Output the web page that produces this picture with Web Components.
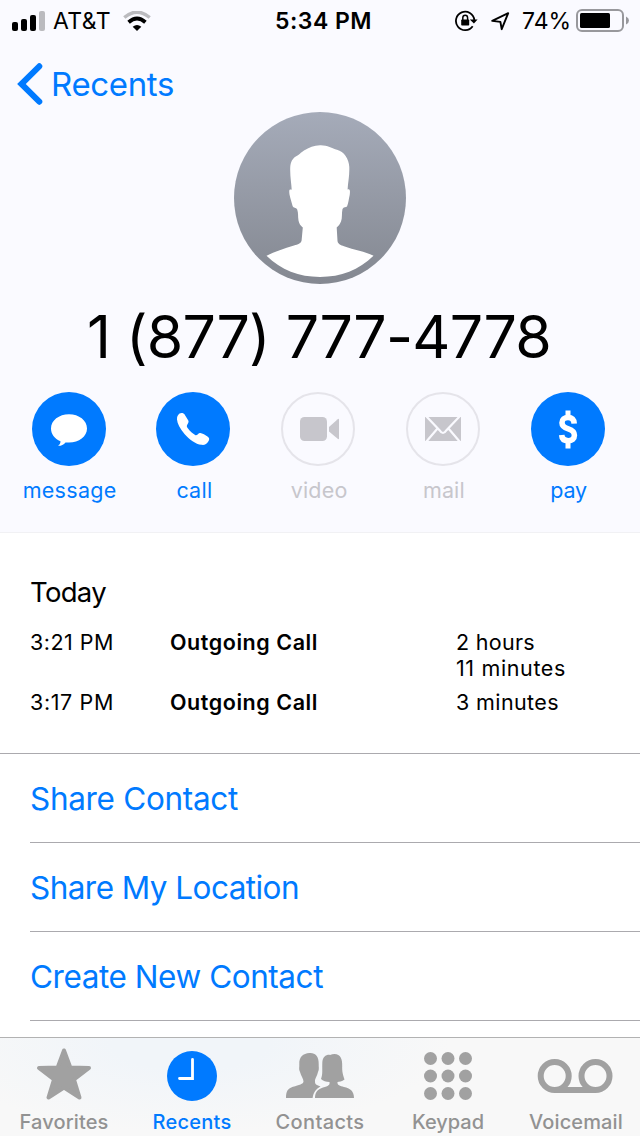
<!DOCTYPE html>
<html lang="en">
<head>
<meta charset="utf-8">
<title>Recents</title>
<style>
  body{
    --color-tint:#007aff;
    --color-disabled:#c7c6cc;
    --color-line:#abaaae;
    --color-hero:#fafaff;
    margin:0;
    width:640px;
    height:1136px;
    overflow:hidden;
    background:white;
    color:black;
    font-family:Inter,"Liberation Sans",sans-serif;
  }
</style>
</head>
<body>
<phone-screen></phone-screen>
<script>
// text tracked out (or in) to a given advance width
class TrackedText extends HTMLElement{
  constructor(){
    super();
    this.attachShadow({mode:'open'});
    this.shadowRoot.innerHTML=`<style>
    :host{ display:inline-block; white-space:nowrap; }
</style><slot></slot>`;
  }
  connectedCallback(){
    const target=parseFloat(this.getAttribute("w"));
    const natural=this.getBoundingClientRect().width;
    const count=this.textContent.length;
    if(target&&natural){
      this.style.letterSpacing=((target-natural)/count).toFixed(3)+"px";
    }
  }
}

class StatusBar extends HTMLElement{
  render(){
    return `
<style>
    :host{
      display:grid;
      grid-template-columns:1fr auto 1fr;
      align-items:center;
      height:41px;
      padding:0 11px 0 12px;
      font-size:23px;
      line-height:41px;
    }
    div{ display:flex; align-items:center; }
    svg{ display:block; }
    tracked-text{ padding-top:1px; line-height:40px; }
    .time{ font-weight:600; padding-left:6px; }
    .right{ justify-content:flex-end; }
    .signal{ margin-right:8px; }
    .wifi{ margin-left:12px; margin-right:1px; }
    .lock{ margin-right:12px; }
    .arrow{ margin-right:12px; }
    .battery{ margin-left:5px; }
</style>
<div>
  <svg class="signal" width="33" height="20" viewBox="0 0 33 20">
    <rect x="0" y="11" width="6" height="9" rx="2"/>
    <rect x="9" y="8" width="6" height="12" rx="2"/>
    <rect x="18" y="4" width="6" height="16" rx="2"/>
    <rect x="27" y="0" width="6" height="20" rx="2" fill="#bbbbbf"/>
  </svg>
  <tracked-text w="58">AT&amp;T</tracked-text>
  <svg class="wifi" width="28" height="20" viewBox="0 0 28 20">
    <path d="M1.300 6.500Q14-4.200 26.700 6.500" fill="none" stroke="#bbbbbf" stroke-width="3.4"/>
    <path d="M5.600 11.200Q14 3.800 22.400 11.200" fill="none" stroke="#000" stroke-width="3.8"/>
    <path d="M9.700 15.800Q14 12 18.300 15.800L14 20Z"/>
  </svg>
</div>
<div class="time"><tracked-text w="97">5:34 PM</tracked-text></div>
<div class="right">
  <svg class="lock" width="24" height="22" viewBox="0 0 24 22">
    <path d="M17.700 16.200A9.200 9.200 0 1 1 19.300 10" fill="none" stroke="#000" stroke-width="1.8"/>
    <path d="M14.800 9.500H22.600L18.900 13.500Z"/>
    <rect x="6.200" y="9.500" width="8" height="6" rx="0.8"/>
    <path d="M7.800 10.400V7.800A2.400 2.600 0 0 1 12.600 7.800V10.400" fill="none" stroke="#000" stroke-width="1.5"/>
  </svg>
  <svg class="arrow" width="19" height="20" viewBox="0 0 19 20">
    <path d="M1.200 9.900L17.200 2.200L10.700 18.200L9.400 10.900Z" fill="none" stroke="#000" stroke-width="1.9" stroke-linejoin="round"/>
  </svg>
  <tracked-text w="49">74%</tracked-text>
  <svg class="battery" width="53" height="23" viewBox="0 0 53 23">
    <rect x="1" y="1" width="46" height="21" rx="5" fill="none" stroke="#98989c" stroke-width="2"/>
    <rect x="4" y="4" width="30" height="15" rx="1.6"/>
    <path d="M50 7.500Q53 9 53 11.500T50 15.500Z" fill="#98989c"/>
  </svg>
</div>`;
  }
  constructor(){
    super();
    this.attachShadow({mode:'open'});
    this.shadowRoot.innerHTML=this.render();
  }
}

class NavBack extends HTMLElement{
  constructor(){
    super();
    this.attachShadow({mode:'open'});
    this.shadowRoot.innerHTML=`
<style>
    :host{
      display:flex;
      align-items:center;
      gap:8px;
      height:71px;
      box-sizing:border-box;
      padding:16px 0 0 17px;
      color:var(--color-tint);
      font-size:33px;
      line-height:40px;
    }
    svg{ display:block; }
    div{ padding-bottom:2px; }
</style>
<svg width="26" height="43" viewBox="0 0 26 43">
  <path d="M22.300 3.300L4.400 21L22.300 38.700" fill="none" stroke="#007aff" stroke-width="6" stroke-linecap="round" stroke-linejoin="miter"/>
</svg>
<div><slot></slot></div>`;
  }
}

class ContactAvatar extends HTMLElement{
  constructor(){
    super();
    this.attachShadow({mode:'open'});
    this.shadowRoot.innerHTML=`
<style>
    :host{ display:block; width:172px; height:172px; margin:0 auto; }
    svg{ display:block; }
</style>
<svg width="172" height="172" viewBox="0 0 172 172">
  <defs><linearGradient id="g" x1="0" y1="0" x2="0" y2="1">
    <stop offset="0" stop-color="#a5abb9"/><stop offset="1" stop-color="#848891"/>
  </linearGradient></defs>
  <circle cx="86" cy="86" r="86" fill="url(#g)"/>
  <path fill="#fff" d="M86 33.300C93 33 98 36.500 103 37.800C110 39.500 115 47 115.300 55C115.600 64 114 70 113.600 77.500C116 76.500 116.300 78.500 115.700 83C114.700 87 114.500 91 113 94.600C112 95.600 109.500 95 108.500 97C107.500 101 108.500 106 107 109.500C106 112 104.500 114 102.700 115.500L103.500 129C104 132.500 107 133 110 134.300C120 138 131 139.500 139.500 143.800C125 158 107 165 86 165S47 158 32.500 143.800C41 139.500 50 136.500 60 133.500C64 132.300 67 131.500 67.600 128.500L68.800 115.500C66.500 113.500 65 111.500 64.500 108.500C63.800 104.500 64.500 101 63.200 97.500C62 95 59.500 96.500 58.600 94C57.600 90 56.500 87 55.500 82.500C55 78.500 55 77 57.700 77.800C57.500 72 56 65 56.200 56C56.500 50 58.500 46 63.500 43.600C66 42.300 66 41 70 38.500C75 35.500 80 33.500 86 33.300Z"/>
</svg>`;
  }
}

const actionIcons={
  message:`<path fill="#fff" d="M37 22.300C47 22.300 55 28.500 55 36.500C55 44.600 47 50.600 37 50.600C35.400 50.600 34.800 50.500 33.500 50.400C31.500 52.700 29 54 26 53.800C27.500 52.800 28.500 51.300 28.500 49.300C22.500 46.800 19 42 19 36.500C19 28.500 27 22.300 37 22.300Z"/>`,
  call:`<path fill="#fff" d="M23.500 21.600C24.800 20.500 27.300 20.700 28.300 22.100L32.300 28.500C33.300 30.200 31.500 32 31 33.200C30.500 34.700 31.200 35.500 32 36.600C34 39.300 36.500 41.500 39.500 43.200C41.300 43.700 42.300 40.800 44.300 41C46.300 41.300 49.500 43 51.800 44.700C53.500 45.900 53.500 47.400 52.600 48.900C50.800 52 48.500 53.300 45.500 52.800C39.500 52.200 33.500 47.500 28.500 42C24 36.500 21.300 31.500 21 27.500C20.900 25 21.700 23 23.500 21.600Z"/>`,
  video:`<rect x="19" y="25" width="27" height="24" rx="4.500" fill="#c7c6cc"/><path fill="#c7c6cc" d="M48 35L56.700 27.200Q58 26.300 58 27.700V46.300Q58 47.700 56.700 46.800L48 39.500Z"/>`,
  mail:`<rect x="19" y="25" width="36" height="24" fill="#c7c6cc"/><path d="M20 24L33.500 38.200Q37 43.800 40.500 38.200L54 24M31.500 36.500L20 50M42.500 36.500L54 50" fill="none" stroke="#fafaff" stroke-width="2.200"/>`,
  pay:`<path fill="none" stroke="#fff" stroke-width="5.600" d="M43.200 31.600C43 27.500 41 25.500 37 25.500C33.500 25.500 31 27.600 31 30.700C31 34.500 34 35.800 37.300 36.900C41 38.100 43.400 39.600 43.400 43.300C43.400 46.800 41 48.700 37.200 48.700C33 48.700 30.900 46.800 30.700 43"/><path d="M37 18.500V26M37 48.500V56.500" stroke="#fff" stroke-width="5"/>`
};

class ContactAction extends HTMLElement{
  connectedCallback(){
    const icon=this.getAttribute("icon");
    const off=this.hasAttribute("disabled");
    this.attachShadow({mode:'open'});
    this.shadowRoot.innerHTML=`
<style>
    :host{
      display:flex;
      flex-direction:column;
      align-items:center;
      width:124.75px;
      color:${off?"var(--color-disabled)":"var(--color-tint)"};
      font-size:21.5px;
      line-height:30px;
    }
    svg{ display:block; margin-bottom:9px; }
    .label{ margin-left:2px; }
</style>
<svg width="74" height="74" viewBox="0 0 74 74">
  ${off
    ?`<circle cx="37" cy="37" r="36" fill="none" stroke="#e5e4ea" stroke-width="2"/>`
    :`<circle cx="37" cy="37" r="37" fill="#007aff"/>`}
  ${actionIcons[icon]}
</svg>
<div class="label"><slot></slot></div>`;
  }
}

class ContactHero extends HTMLElement{
  constructor(){
    super();
    this.attachShadow({mode:'open'});
    this.shadowRoot.innerHTML=`
<style>
    :host{
      display:block;
      box-sizing:border-box;
      height:533px;
      background:var(--color-hero);
      border-bottom:1px solid #f1f1f4;
    }
    h1{
      margin:0;
      height:108px;
      line-height:106px;
      padding-right:2px;
      font-size:59px;
      font-weight:400;
      text-align:center;
    }
    .actions{ display:flex; padding-left:6.25px; }
</style>
<status-bar></status-bar>
<nav-back><tracked-text w="123">Recents</tracked-text></nav-back>
<contact-avatar></contact-avatar>
<h1><tracked-text w="464">1 (877) 777-4778</tracked-text></h1>
<div class="actions">
  <contact-action icon="message"><tracked-text w="94">message</tracked-text></contact-action>
  <contact-action icon="call"><tracked-text w="36">call</tracked-text></contact-action>
  <contact-action icon="video" disabled><tracked-text w="57">video</tracked-text></contact-action>
  <contact-action icon="mail" disabled><tracked-text w="42">mail</tracked-text></contact-action>
  <contact-action icon="pay"><tracked-text w="37">pay</tracked-text></contact-action>
</div>`;
  }
}

class CallHistory extends HTMLElement{
  render(){
    return `
<style>
    :host{
      display:block;
      box-sizing:border-box;
      height:221px;
      padding:39px 0 0 30px;
      border-bottom:1px solid var(--color-line);
    }
    h2{ margin:0 0 17px; font-size:27.5px; line-height:40px; font-weight:400; }
    .call{
      display:grid;
      grid-template-columns:140px 286px 1fr;
      margin-bottom:8px;
      font-size:21.5px;
      line-height:26px;
    }
    b{ font-weight:600; }
    .length{ display:flex; flex-direction:column; align-items:flex-start; }
</style>
<h2><tracked-text w="76">Today</tracked-text></h2>
${
  this.calls.map(i=>`
<div class="call">
  <span><tracked-text w="84">${i.time}</tracked-text></span>
  <b><tracked-text w="148">${i.label}</tracked-text></b>
  <div class="length">
    ${i.length.map(([text,w])=>`<tracked-text w="${w}">${text}</tracked-text>`).join("")}
  </div>
</div>`).join("")
}`;
  }
  constructor(){
    super();
    this.calls=[
      {time:"3:21 PM",label:"Outgoing Call",length:[["2 hours",79],["11 minutes",110]]},
      {time:"3:17 PM",label:"Outgoing Call",length:[["3 minutes",103]]}
    ];
    this.attachShadow({mode:'open'});
    this.shadowRoot.innerHTML=this.render();
  }
}

class LinkRow extends HTMLElement{
  constructor(){
    super();
    this.attachShadow({mode:'open'});
    this.shadowRoot.innerHTML=`
<style>
    :host{
      display:block;
      margin-left:30px;
      height:88px;
      line-height:90px;
      font-size:31.5px;
      color:var(--color-tint);
      border-bottom:1px solid var(--color-line);
    }
</style>
<slot></slot>`;
  }
}

const tabIcons={
  favorites:`<path fill="#a1a1a1" stroke="#a1a1a1" stroke-width="4" stroke-linejoin="round" d="M40 12.500L46.300 29.500L65 30L50 41.500L55.500 59.500L40 49.500L24.500 59.500L30 41.500L15 30L33.700 29.500Z"/>`,
  recents:`<circle cx="40" cy="38" r="25" fill="#007aff"/><path d="M40.500 21.500V40.500H27.500" fill="none" stroke="#fff" stroke-width="2.800" stroke-linecap="round"/>`,
  contacts:`<path fill="#a1a1a1" d="M29.500 15C35 14.500 39 18 38.700 26C38.500 29 39.500 31 38 34C37 38 35.500 40 35 42C34.800 45.500 35.500 46.500 38 47.500L40.500 48.500C36 51 33.500 54 32.600 60H6C6 53 8 50.500 13 48.800C19 47 23.500 46 23.500 43.500C23.500 41 21 38 20 34C18.500 31.500 19.500 29 19.300 26C19 19 23 15.500 29.500 15Z"/>
    <path fill="#a1a1a1" d="M54.500 16C60.500 16 62.500 21 62.200 28C62 34 63 37 64.500 41.500C62 43.500 59 43.800 57.500 44C57 47 60 48 64 49C70 50.300 74 53 74 60H35C35 54 38 51 43 49.500C48.500 48 50 47 49.500 44C46 43.800 43 43 41 41C43 36 42 31 42.300 25C42.500 19 46 16.500 50 16.900C51.500 16.200 53 16 54.500 16Z"/>`,
  keypad:[20.500,38,55.500].map(y=>[22.500,40,57.500].map(x=>`<circle cx="${x}" cy="${y}" r="6.500" fill="#a1a1a1"/>`).join("")).join(""),
  voicemail:`<g fill="none" stroke="#a1a1a1" stroke-width="6"><circle cx="18.700" cy="38" r="14"/><circle cx="59.500" cy="38" r="14"/><path d="M18.700 52H59.500"/></g>`
};

class TabItem extends HTMLElement{
  connectedCallback(){
    this.attachShadow({mode:'open'});
    this.shadowRoot.innerHTML=`
<style>
    :host{
      display:flex;
      flex-direction:column;
      align-items:center;
      color:${this.hasAttribute("active")?"var(--color-tint)":"#929292"};
      font-size:20px;
      font-weight:500;
      line-height:24px;
    }
    svg{ display:block; margin-bottom:-2px; }
</style>
<svg width="80" height="74" viewBox="0 0 80 74">${tabIcons[this.getAttribute("icon")]}</svg>
<slot></slot>`;
  }
}

class TabBar extends HTMLElement{
  constructor(){
    super();
    this.attachShadow({mode:'open'});
    this.shadowRoot.innerHTML=`
<style>
    :host{
      display:grid;
      grid-template-columns:repeat(5,1fr);
      box-sizing:border-box;
      height:99px;
      border-top:1px solid #b2b2b2;
      background:radial-gradient(ellipse 260px 90px at 190px 5px,#f1f5f9 30%,#f8f8f8 100%);
    }
</style>
<tab-item icon="favorites"><tracked-text w="89">Favorites</tracked-text></tab-item>
<tab-item icon="recents" active><tracked-text w="79">Recents</tracked-text></tab-item>
<tab-item icon="contacts"><tracked-text w="89">Contacts</tracked-text></tab-item>
<tab-item icon="keypad"><tracked-text w="72">Keypad</tracked-text></tab-item>
<tab-item icon="voicemail"><tracked-text w="94">Voicemail</tracked-text></tab-item>`;
  }
}

class PhoneScreen extends HTMLElement{
  constructor(){
    super();
    this.attachShadow({mode:'open'});
    this.shadowRoot.innerHTML=`
<style>
    :host{ display:flex; flex-direction:column; height:1136px; }
    main{ flex:1; min-height:0; overflow:hidden; }
</style>
<main>
  <contact-hero></contact-hero>
  <call-history></call-history>
  <link-row><tracked-text w="208">Share Contact</tracked-text></link-row>
  <link-row><tracked-text w="269">Share My Location</tracked-text></link-row>
  <link-row><tracked-text w="293">Create New Contact</tracked-text></link-row>
</main>
<tab-bar></tab-bar>`;
  }
}

window.customElements.define('status-bar',StatusBar);
window.customElements.define('nav-back',NavBack);
window.customElements.define('contact-avatar',ContactAvatar);
window.customElements.define('contact-action',ContactAction);
window.customElements.define('contact-hero',ContactHero);
window.customElements.define('call-history',CallHistory);
window.customElements.define('link-row',LinkRow);
window.customElements.define('tab-item',TabItem);
window.customElements.define('tab-bar',TabBar);
window.customElements.define('phone-screen',PhoneScreen);
// last, so every text is already laid out when it is measured
window.customElements.define('tracked-text',TrackedText);
</script>
</body>
</html>
